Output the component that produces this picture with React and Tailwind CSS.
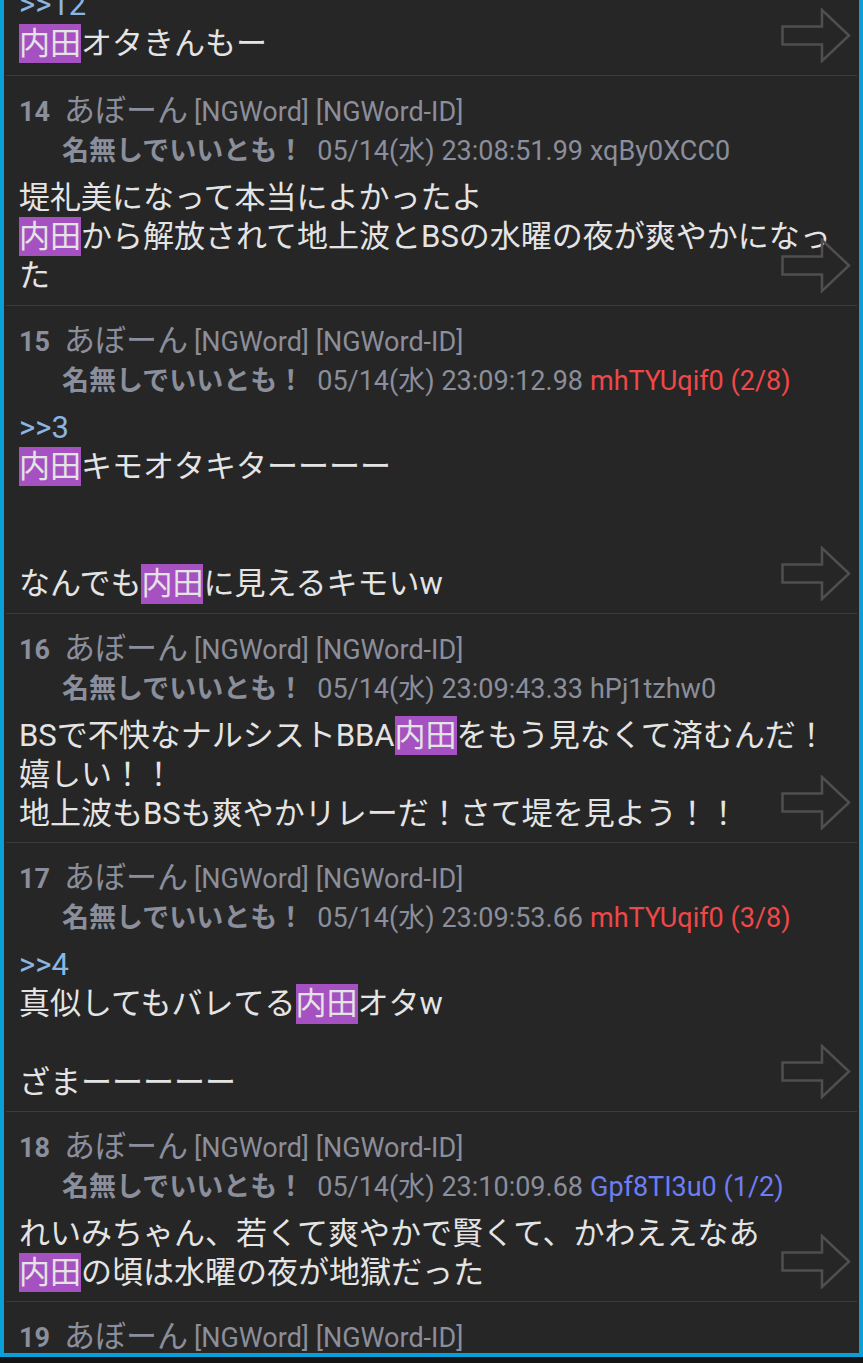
const FONT = "font-['Roboto','Noto_Sans_CJK_JP',sans-serif]"

const posts = [
  { no: 14, time: '23:08:51.99', id: 'xqBy0XCC0', idColor: 'text-[#8b8e9b]',
    lines: ['堤礼美になって本当によかったよ', '内田から解放されて地上波とBSの水曜の夜が爽やかになっ', 'た'] },
  { no: 15, time: '23:09:12.98', id: 'mhTYUqif0 (2/8)', idColor: 'text-[#f04848]',
    lines: ['>>3', '内田キモオタキターーーー', '', '', 'なんでも内田に見えるキモいw'] },
  { no: 16, time: '23:09:43.33', id: 'hPj1tzhw0', idColor: 'text-[#8b8e9b]',
    lines: ['BSで不快なナルシストBBA内田をもう見なくて済むんだ！', '嬉しい！！', '地上波もBSも爽やかリレーだ！さて堤を見よう！！'] },
  { no: 17, time: '23:09:53.66', id: 'mhTYUqif0 (3/8)', idColor: 'text-[#f04848]',
    lines: ['>>4', '真似してもバレてる内田オタw', '', 'ざまーーーーー'] },
  { no: 18, time: '23:10:09.68', id: 'Gpf8TI3u0 (1/2)', idColor: 'text-[#6d7ef2]',
    lines: ['れいみちゃん、若くて爽やかで賢くて、かわええなあ', '内田の頃は水曜の夜が地獄だった'] },
]

function Arrow() {
  return (
    <svg width="70" height="55" viewBox="0 0 70 55" className="absolute right-[6px] bottom-[12px]">
      <path d="M1.5 18.5 H41 V2 L68 27.5 L41 53 V36.5 H1.5 Z" fill="none" stroke="#4f4f4f" strokeWidth="2.5" strokeLinejoin="miter" />
    </svg>
  )
}

function Line({ text }) {
  if (text === '') return <div className="h-[39.2px]" />
  if (text.startsWith('>>')) return <div className="text-[#8ab6e4]">{text}</div>
  const parts = text.split('内田')
  return (
    <div className="whitespace-nowrap">
      {parts.map((p, i) => (
        <span key={i}>
          {i > 0 && <span className="inline-block bg-[#a651c1]">内田</span>}
          {p}
        </span>
      ))}
    </div>
  )
}

function Body({ lines }) {
  return (
    <div className="text-[31px] leading-[39.2px] text-[#e4e4e4]">
      {lines.map((l, i) => <Line key={i} text={l} />)}
    </div>
  )
}

function Header({ no }) {
  return (
    <div className="flex items-baseline h-[40px] leading-[40px] text-[#8b8e9b]">
      <span className="text-[27px] font-bold">{no}</span>
      <span className="ml-[14px] text-[31px]">あぼーん</span>
      <span className="ml-[6px] text-[27px]">[NGWord] [NGWord-ID]</span>
    </div>
  )
}

function Post({ post }) {
  return (
    <div className="relative mx-[2px] border-t border-[#3c3c3c] pl-[13px] pr-[12px] pt-[15px] pb-[9px]">
      <Header no={post.no} />
      <div className="flex items-baseline h-[40px] leading-[40px] pl-[43px] text-[27px] text-[#8b8e9b]">
        <span className="font-bold">名無しでいいとも！</span>
        <span className="ml-[13px]">05/14(水) {post.time}</span>
        <span className={'ml-[7px] ' + post.idColor}>{post.id}</span>
      </div>
      <div className="mt-[7px]">
        <Body lines={post.lines} />
      </div>
      <Arrow />
    </div>
  )
}

export default function App() {
  return (
    <div className={'w-[863px] h-[1363px] overflow-hidden bg-[#141414] ' + FONT}>
      <div className="h-[1357px] border-x-4 border-b-4 border-[#0a9fd9] bg-[#262626] overflow-hidden">
        <div className="relative mx-[2px] -mt-[15px] pl-[13px] pr-[12px] pb-[11.5px]">
          <Body lines={['>>12', '内田オタきんもー']} />
          <Arrow />
        </div>
        {posts.map((p) => <Post key={p.no} post={p} />)}
        <div className="mx-[2px] border-t border-[#3c3c3c] pl-[13px] pt-[15px]">
          <Header no={19} />
        </div>
      </div>
    </div>
  )
}
